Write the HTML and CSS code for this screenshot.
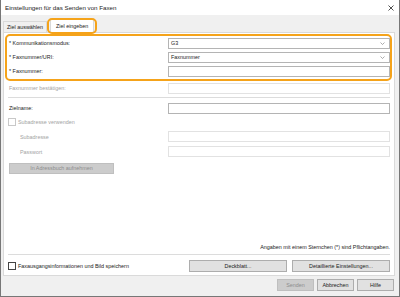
FILE: index.html
```html
<html>
<head>
  <link rel="stylesheet" href="styles.css">
</head>
<body>

<div class="window">
  <div class="titlebar">
    <span class="title">Einstellungen für das Senden von Faxen</span>
    <svg class="close" width="6" height="6" viewBox="0 0 6 6">
      <path d="M0.5 0.5 L5.5 5.5 M5.5 0.5 L0.5 5.5" stroke="#222" stroke-width="0.8" fill="none"/>
    </svg>
  </div>

  <div class="dialog-body">
    <div class="tabs">
      <div class="tab">Ziel auswählen</div>
      <div class="tab tab-active">Ziel eingeben</div>
    </div>

    <div class="panel">
      <div class="required-box">
        <div class="row">
          <label>* Kommunikationsmodus:</label>
          <div class="field select">G3
            <svg class="chevron" width="5" height="3" viewBox="0 0 5 3"><path d="M0.5 0.5 L2.5 2.5 L4.5 0.5" stroke="#888" stroke-width="0.7" fill="none"/></svg>
          </div>
        </div>
        <div class="row">
          <label>* Faxnummer/URI:</label>
          <div class="field select">Faxnummer
            <svg class="chevron" width="5" height="3" viewBox="0 0 5 3"><path d="M0.5 0.5 L2.5 2.5 L4.5 0.5" stroke="#888" stroke-width="0.7" fill="none"/></svg>
          </div>
        </div>
        <div class="row">
          <label>* Faxnummer:</label>
          <div class="field"></div>
        </div>
      </div>

      <div class="row disabled">
        <label>Faxnummer bestätigen:</label>
        <div class="field"></div>
      </div>

      <div class="sep"></div>

      <div class="row">
        <label>Zielname:</label>
        <div class="field"></div>
      </div>

      <div class="check-row disabled">
        <span class="checkbox"></span>
        <span>Subadresse verwenden</span>
      </div>

      <div class="row sub-row disabled">
        <label>Subadresse</label>
        <div class="field"></div>
      </div>
      <div class="row sub-row disabled">
        <label>Passwort</label>
        <div class="field"></div>
      </div>

      <div class="btn btn-disabled btn-addr">In Adressbuch aufnehmen</div>

      <div class="spacer"></div>

      <div class="note">Angaben mit einem Sternchen (*) sind Pflichtangaben.</div>
      <div class="sep sep-bottom"></div>

      <div class="footer-row">
        <span class="checkbox"></span>
        <span class="footer-label">Faxausgangsinformationen und Bild speichern</span>
        <div class="btn btn-wide btn-first">Deckblatt...</div>
        <div class="btn btn-wide">Detaillierte Einstellungen...</div>
      </div>
    </div>

    <div class="dialog-buttons">
      <div class="btn btn-dialog btn-disabled">Senden</div>
      <div class="btn btn-dialog">Abbrechen</div>
      <div class="btn btn-dialog">Hilfe</div>
    </div>
  </div>
</div>

</body>
</html>
```

FILE: styles.css
```css
body {
  margin: 0;
}

.window {
  width: 400px;
  height: 297px;
  box-sizing: border-box;
  border: 1px solid #777;
  border-top: none;
  background: #f0f0f0;
  font-family: "Liberation Sans", Arial, sans-serif;
  font-size: 5.4px;
  color: #1a1a1a;
  display: flex;
  flex-direction: column;
}

.titlebar {
  height: 15px;
  background: #fff;
  display: flex;
  align-items: center;
  padding: 0 5px 0 4px;
}

.title {
  font-size: 6.2px;
  flex: 1;
}

.close {
  display: block;
}

.dialog-body {
  padding: 0 4px 0 2px;
}

.tabs {
  height: 17px;
  display: flex;
  align-items: flex-end;
}

.tab {
  height: 11px;
  line-height: 11px;
  padding: 0 3px;
  box-sizing: border-box;
  border: 1px solid #d9d9d9;
  border-bottom: none;
  background: #f0f0f0;
}

.tab-active {
  position: relative;
  height: 14px;
  line-height: 12px;
  margin-left: 3px;
  margin-bottom: -1px;
  padding: 0 5px;
  background: #fff;
  z-index: 1;
}

.tab-active::after {
  content: "";
  position: absolute;
  left: -4px;
  right: -4px;
  top: -2px;
  bottom: -1px;
  border: 2px solid #f5a31a;
  border-radius: 5px;
}

.panel {
  height: 244px;
  box-sizing: border-box;
  border: 1px solid #dadada;
  background: #fff;
  padding: 1px 4px 3px 5px;
  display: flex;
  flex-direction: column;
}

.required-box {
  margin: 0 -2px 0 -4px;
  padding: 0 0 1px 2px;
  border: 2px solid #f5a31a;
  border-radius: 5px;
}

.row {
  display: grid;
  grid-template-columns: 159px 1fr;
  align-items: center;
  height: 14px;
}

.field {
  height: 11px;
  box-sizing: border-box;
  border: 1px solid #b4b4b4;
  background: #fff;
}

.select {
  display: flex;
  align-items: center;
  justify-content: space-between;
  padding: 0 4px 0 2px;
  line-height: 9px;
}

.chevron {
  display: block;
}

.disabled {
  color: #a3a3a3;
}

.disabled .field {
  border-color: #e2e2e2;
}

.sep {
  height: 1px;
  background: #dcdcdc;
  margin: 2px 0 3px -1px;
}

.check-row {
  display: flex;
  align-items: center;
  height: 14px;
  margin-left: -1px;
}

.checkbox {
  width: 8px;
  height: 8px;
  box-sizing: border-box;
  border: 1px solid #333;
  background: #fff;
  margin-right: 2px;
}

.check-row .checkbox {
  border-color: #c8c8c8;
}

.sub-row {
  height: 15px;
  padding-left: 11px;
  grid-template-columns: 148px 1fr;
}

.sub-row:first-of-type {
  margin-top: 1px;
}

.btn {
  height: 12px;
  box-sizing: border-box;
  border: 1px solid #adadad;
  background: #e1e1e1;
  text-align: center;
  line-height: 10px;
}

.btn-disabled {
  background: #cccccc;
  border-color: #bfbfbf;
  color: #8d8d8d;
}

.btn-addr {
  width: 105px;
  height: 11px;
  line-height: 9px;
  margin-top: 4px;
}

.spacer {
  flex: 1;
}

.note {
  text-align: right;
  line-height: 7px;
}

.sep-bottom {
  margin: 3px 0 5px -1px;
}

.footer-row {
  display: flex;
  align-items: center;
  height: 12px;
}

.footer-row .checkbox {
  margin-left: -1px;
  border-color: #444;
}

.footer-label {
  flex: 1;
}

.btn-wide {
  width: 98px;
}

.btn-first {
  margin-right: 5px;
}

.dialog-buttons {
  display: flex;
  justify-content: flex-end;
  gap: 3px;
  margin-top: 3px;
  padding-right: 1px;
}

.btn-dialog {
  width: 37px;
}
```
